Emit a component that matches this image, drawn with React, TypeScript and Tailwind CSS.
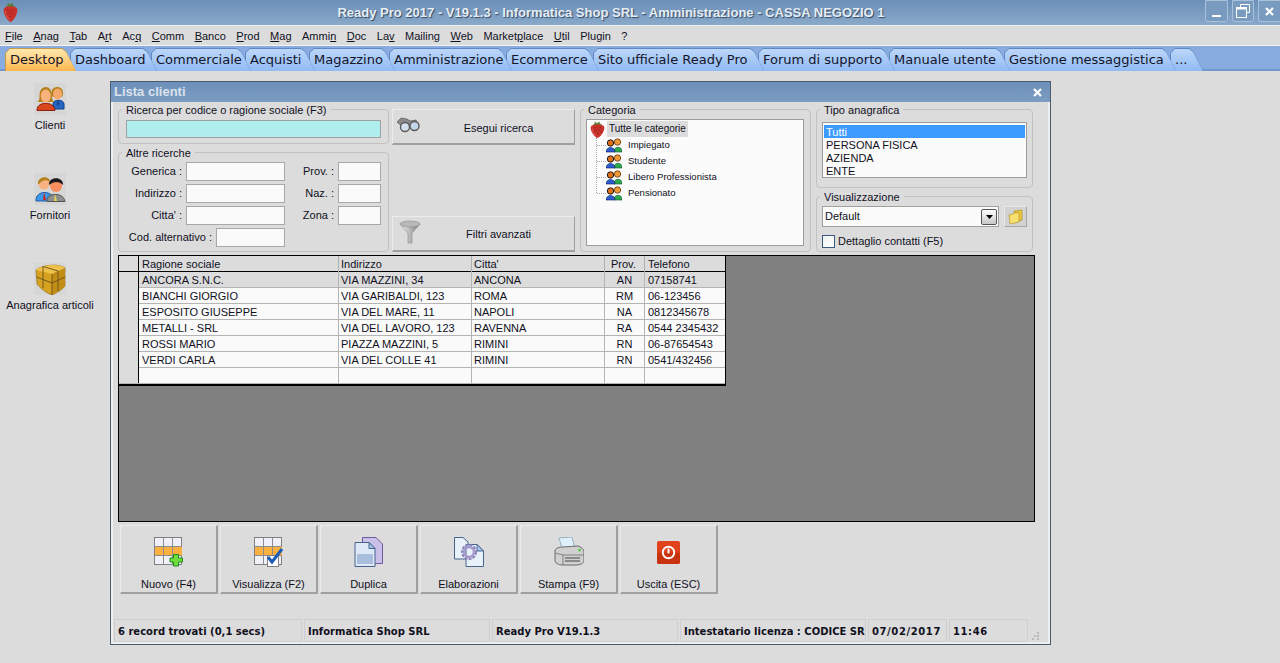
import React from 'react';

const menus: [string, number][] = [
  ['File', 0], ['Anag', 0], ['Tab', 0], ['Art', 1], ['Acq', 2], ['Comm', 0], ['Banco', 0], ['Prod', 0], ['Mag', 0],
  ['Ammin', 4], ['Doc', 0], ['Lav', 2], ['Mailing', 6], ['Web', 0], ['Marketplace', 6], ['Util', 0], ['Plugin', -1], ['?', -1],
];

const tabs: [string, string][] = [
  ['Desktop', 'w-[71px]'], ['Dashboard', 'w-[87px]'], ['Commerciale', 'w-[100px]'], ['Acquisti', 'w-[70px]'],
  ['Magazzino', 'w-[86px]'], ['Amministrazione', 'w-[123px]'], ['Ecommerce', 'w-[93px]'], ['Sito ufficiale Ready Pro', 'w-[171px]'],
  ['Forum di supporto', 'w-[137px]'], ['Manuale utente', 'w-[121px]'], ['Gestione messaggistica', 'w-[172px]'], ['...', 'w-[33px]'],
];

const rows = [
  ['ANCORA S.N.C.', 'VIA MAZZINI, 34', 'ANCONA', 'AN', '07158741'],
  ['BIANCHI GIORGIO', 'VIA GARIBALDI, 123', 'ROMA', 'RM', '06-123456'],
  ['ESPOSITO GIUSEPPE', 'VIA DEL MARE, 11', 'NAPOLI', 'NA', '0812345678'],
  ['METALLI - SRL', 'VIA DEL LAVORO, 123', 'RAVENNA', 'RA', '0544 2345432'],
  ['ROSSI MARIO', 'PIAZZA MAZZINI, 5', 'RIMINI', 'RN', '06-87654543'],
  ['VERDI CARLA', 'VIA DEL COLLE 41', 'RIMINI', 'RN', '0541/432456'],
  ['', '', '', '', ''],
];

const Strawberry = ({ w = 15, h = 17 }: { w?: number; h?: number }) => (
  <svg width={w} height={h} viewBox="0 0 16 20" preserveAspectRatio="none">
    <path d="M3 4 L5 3 L5 0.500 L7.500 2.500 L10 0.500 L10.500 3 L13 4 L8 6 Z" fill="#5b7f3a" />
    <path d="M1 6.500 C3 3.500 13 3.500 15 6.500 C16.500 11 11 19.500 8 19.800 C5 19.500 -0.500 11 1 6.500 Z" fill="#c9302a" />
    <path d="M2.500 7 C2.500 11 5.500 16 8 18 C4.500 17 1 11 2.500 7 Z" fill="#dd5a50" />
    <g fill="#7e1c18">
      <circle cx="5" cy="8" r=".6" /><circle cx="8" cy="8" r=".6" /><circle cx="11" cy="8" r=".6" />
      <circle cx="6.500" cy="11" r=".6" /><circle cx="9.500" cy="11" r=".6" /><circle cx="4.500" cy="12" r=".5" /><circle cx="11.500" cy="12" r=".5" />
      <circle cx="8" cy="14.500" r=".6" />
    </g>
  </svg>
);

const ClientiIcon = () => (
  <svg width="32" height="32" viewBox="0 0 32 32">
    <path d="M19 21 C19 16 30 16 30 21 V26 H19 Z" fill="#2566c4" stroke="#123c80" />
    <path d="M24 17 L26 21 L24 23 L22 21 Z" fill="#1c4a96" />
    <path d="M17.500 10 C17 2 29.500 2 29 10 C29 12 28.500 13 28 14 H19 C18 13 17.500 12 17.500 10 Z" fill="#b5821f" />
    <ellipse cx="23.500" cy="11" rx="4.500" ry="5.500" fill="#f4a86c" />
    <path d="M3 27 C3 18 20 18 21 27 V27.500 H3 Z" fill="#d8481c" stroke="#8a1c0c" />
    <path d="M5.500 13 C5 1 18.500 1 18 13 C18 16 19 18 20 19 H3.500 C5 18 5.500 16 5.500 13 Z" fill="#b5821f" />
    <ellipse cx="11.800" cy="13" rx="5" ry="6.500" fill="#fab27c" />
  </svg>
);

const FornitoriIcon = () => (
  <svg width="32" height="32" viewBox="0 0 32 32">
    <path d="M2 27 C2 17 19 17 20 27 V28 H2 Z" fill="#3d97e8" stroke="#1c5aa8" />
    <path d="M10 19 L12 27 L9 27 Z" fill="#c8281c" />
    <circle cx="10" cy="11" r="5.500" fill="#f7b27f" />
    <path d="M4 11 C3 3 16 2 16 9 C12 6 8 7 5 11 Z" fill="#b5821f" />
    <path d="M13 28.500 C12 19 30 19 31 28.500 Z" fill="#8e8e8e" stroke="#555" />
    <path d="M21 21 L23 28 L20 28 Z" fill="#e8d050" />
    <circle cx="22" cy="13" r="6" fill="#fa8e5e" />
    <path d="M15 12 C14 3 30 3 29 12 C25 8 20 8 15 12 Z" fill="#1a1a1a" />
  </svg>
);

const BoxIcon = () => (
  <svg width="32" height="32" viewBox="0 0 32 32">
    <path d="M2 7 C8 2 24 0 31 5 L31 23 C28 27 22 30 18 32 C12 30 6 25 3 21 Z" fill="#d6a11e" stroke="#8a6410" strokeWidth=".6" />
    <path d="M2 7 C8 2 24 0 31 5 L18 11 Z" fill="#eec24a" />
    <path d="M18 11 L31 5 L31 23 C28 27 22 30 18 32 Z" fill="#c28d14" />
    <path d="M9 3.500 L24 8 M9 3.500 V25 M24 8 V28 M2.500 14 L18 20 L31 14 M18 11 V32" fill="none" stroke="#6a5020" strokeWidth=".9" />
  </svg>
);

const SmallPeople = () => (
  <svg width="16" height="16" viewBox="0 0 16 16">
    <path d="M8 14 C8 9 16 9 16 14 V15 H8 Z" fill="#2aa84a" stroke="#14502a" strokeWidth=".6" />
    <circle cx="11.500" cy="5" r="3.200" fill="#f09a3a" stroke="#5a3410" strokeWidth=".8" />
    <path d="M0 15 C0 9 9 9 9 15 Z" fill="#2a5ad0" stroke="#10245a" strokeWidth=".6" />
    <circle cx="4.500" cy="6" r="3.200" fill="#e0701c" stroke="#1a1a1a" strokeWidth="1" />
  </svg>
);

const Binoculars = () => (
  <svg width="24" height="16" viewBox="0 0 24 16">
    <path d="M1 5 L5 1 L11 2 L14 4 L20 3 L23 8 L14 9 L8 11 Z" fill="#8a8a8a" stroke="#4a4a4a" strokeWidth=".6" />
    <circle cx="9" cy="10" r="4.500" fill="#d4e2f0" stroke="#5a5a5a" strokeWidth="1.400" />
    <circle cx="18.500" cy="9" r="4.500" fill="#c4d6e8" stroke="#5a5a5a" strokeWidth="1.400" />
  </svg>
);

const Funnel = () => (
  <svg width="22" height="24" viewBox="0 0 22 24">
    <defs>
      <linearGradient id="fun" x1="0" x2="1">
        <stop offset="0" stopColor="#f4f4f4" /><stop offset="1" stopColor="#7a7a7a" />
      </linearGradient>
    </defs>
    <path d="M1 4 L21 4 L13 13 L13 23 L9 23 L9 13 Z" fill="url(#fun)" stroke="#8a8a8a" strokeWidth=".6" />
    <ellipse cx="11" cy="4" rx="10" ry="3" fill="#b8b8b8" stroke="#8a8a8a" strokeWidth=".6" />
  </svg>
);

const GridBase = () => (
  <>
    <rect x=".5" y=".5" width="27" height="27" fill="#f0f0fa" stroke="#808080" />
    <rect x="1" y="9.500" width="27" height="9" fill="#fbb040" />
    <path d="M9.500 1 V27 M18.500 1 V27 M1 9.500 H27 M1 18.500 H27" stroke="#8c8c8c" fill="none" />
  </>
);

const NuovoIcon = () => (
  <svg width="30" height="30" viewBox="0 0 30 30">
    <GridBase />
    <path d="M19.500 17.500 H24.500 V21 H28.500 V25 H24.500 V29 H19.500 V25 H16 V21 H19.500 Z" fill="#6fdc3c" stroke="#1f8a1c" />
  </svg>
);

const VisualizzaIcon = () => (
  <svg width="30" height="30" viewBox="0 0 30 30">
    <GridBase />
    <rect x="13.500" y="18.500" width="11" height="11" fill="#fff" stroke="#808080" />
    <path d="M14 20 L18 25 L28 12" fill="none" stroke="#1c5cb8" strokeWidth="3" />
  </svg>
);

const DuplicaIcon = () => (
  <svg width="30" height="30" viewBox="0 0 30 30">
    <path d="M8.500 .5 H22 L28.500 7 V26.500 H8.500 Z" fill="#cabfe6" stroke="#6a5aa0" />
    <path d="M1 5.500 H15 L21 11.500 V29.500 H1 Z" fill="#dfe8f6" stroke="#46648c" />
    <path d="M15 5.500 V11.500 H21 Z" fill="#a8c8e8" stroke="#46648c" />
    <rect x="3" y="17" width="16" height="10" fill="#a9bedd" />
  </svg>
);

const ElaborazioniIcon = () => (
  <svg width="30" height="30" viewBox="0 0 30 30">
    <path d="M.5 .5 H9 L14 5 V22 H.5 Z" fill="#e8f0fa" stroke="#46648c" />
    <path d="M12 7.500 H23 L29.500 14 V29.500 H12 Z" fill="#e8f0fa" stroke="#46648c" />
    <path d="M23 7.500 V14 H29.500 Z" fill="#a8c8e8" stroke="#46648c" />
    <circle cx="15" cy="15" r="6" fill="none" stroke="#8f84bc" strokeWidth="4" strokeDasharray="2.500 1" />
    <circle cx="15" cy="15" r="5" fill="none" stroke="#a79ccc" strokeWidth="2.500" />
  </svg>
);

const PrinterIcon = () => (
  <svg width="30" height="30" viewBox="0 0 30 30">
    <path d="M5 1 L18 0 L21 12 L9 14 Z" fill="#dff0fa" stroke="#98b0c0" />
    <path d="M1 14 C1 11 6 10 9 10 L24 9 C27 10 30 12 30 15 V24 C30 26 26 28 22 28 H9 C4 28 1 26 1 23 Z" fill="#d0d0d0" stroke="#6a6a6a" />
    <path d="M1 16 L9 18 H30 M9 18 V28" fill="none" stroke="#808080" />
    <path d="M11 21 H26 M11 24 H26" stroke="#444" />
    <circle cx="25.500" cy="13" r="1.500" fill="#5ecb4a" />
  </svg>
);

const PowerIcon = () => (
  <svg width="23" height="23" viewBox="0 0 24 24">
    <rect width="24" height="24" rx="2" fill="#e0421c" />
    <rect y="12" width="24" height="12" rx="2" fill="#c8320f" />
    <circle cx="12" cy="12" r="6" fill="none" stroke="#fff" strokeWidth="2" />
    <path d="M12 8 V13" stroke="#fff" strokeWidth="2" />
  </svg>
);

const FolderIcon = () => (
  <svg width="16" height="16" viewBox="0 0 16 16">
    <path d="M6 2 L14 1 V11 L6 14 Z" fill="#e8c840" stroke="#a88a20" strokeWidth=".6" />
    <path d="M1 6 L5 5 L6 4 L11 3.500 V13 L2 15 Z" fill="#f8e070" stroke="#a88a20" strokeWidth=".6" />
  </svg>
);

const Group = ({ title, className, children }: { title: string; className: string; children: React.ReactNode }) => (
  <fieldset className={`border border-[#c2c2c2] rounded-[4px] px-[5px] ${className}`}>
    <legend className="-ml-[2px] px-[4px] h-[14px] leading-[16px] -mb-px">{title}</legend>
    {children}
  </fieldset>
);

const Field = ({ label, w, boxW }: { label: string; w: string; boxW: string }) => (
  <div className="flex items-center">
    <span className={`${w} text-right pr-[4px]`}>{label}</span>
    <span className={`${boxW} h-[19px] bg-[#fafafa] border border-[#a8a8a8]`} />
  </div>
);

const ActionButton = ({ label, icon }: { label: string; icon: React.ReactNode }) => (
  <button className="w-[98px] h-[69px] flex flex-col items-center border border-t-[#ececec] border-l-[#ececec] border-r-2 border-b-2 border-r-[#a0a0a0] border-b-[#a0a0a0] bg-[#dcdcdc]">
    <span className="h-[30px] mt-[11px] flex items-center justify-center">{icon}</span>
    <span className="mt-[10px] leading-[14px]">{label}</span>
  </button>
);

const StatusCell = ({ text, w, className = '' }: { text: string; w: string; className?: string }) => (
  <div className={`${w} ${className} h-[23px] border border-[#cfcfcf] pl-[3px] pt-[1px] flex items-center overflow-hidden whitespace-nowrap font-bold text-[10px] font-['DejaVu_Sans',sans-serif]`}>
    {text}
  </div>
);

const cols = 'grid grid-cols-[20px_200px_133px_133px_40px_81px]';

export default function App() {
  return (
    <div className="w-[1280px] h-[663px] overflow-hidden bg-[#dcdcdc] text-[#10101c] text-[11px] font-['Liberation_Sans',sans-serif]">
      {/* Title bar */}
      <div className="relative h-[26px] bg-gradient-to-b from-[#6b8fb8] to-[#8aa9c9] border-b border-[#f0f0f0] flex items-center justify-center">
        <span className="absolute left-[3px] top-[2px]"><Strawberry w={15} h={20} /></span>
        <span className="ml-[-58px] text-[13px] font-bold text-[#e6edf4] [text-shadow:1px_1px_1px_#2f4a68]">
          Ready Pro 2017 - V19.1.3 - Informatica Shop SRL - Amministrazione - CASSA NEGOZIO 1
        </span>
        <div className="absolute right-0 top-0 flex gap-[4px]">
          <div className="w-[23px] h-[22px] rounded-b-[3px] border border-[#a9c1da] bg-[#7a9bc0] flex items-end justify-center pb-[4px]">
            <span className="w-[9px] h-[2px] bg-white" />
          </div>
          <div className="w-[22px] h-[22px] rounded-b-[3px] border border-[#a9c1da] bg-[#7a9bc0] flex items-center justify-center">
            <svg width="14" height="14" viewBox="0 0 14 14" fill="none" stroke="#fff">
              <path d="M4.500 3.500 V.5 H13.500 V8.500 H10.500" />
              <rect x=".5" y="3.500" width="10" height="10" />
              <path d="M1 4.500 H10" strokeWidth="2" />
            </svg>
          </div>
          <div className="w-[22px] h-[22px] rounded-bl-[3px] border border-r-0 border-[#a9c1da] bg-[#7a9bc0] flex items-center justify-center">
            <svg width="9" height="9" viewBox="0 0 9 9" stroke="#fff" strokeWidth="2.200"><path d="M1 1 L8 8 M8 1 L1 8" /></svg>
          </div>
        </div>
      </div>

      {/* Menu */}
      <div className="h-[19px] flex items-center pl-[5px] gap-[10.5px] pt-[1px]">
        {menus.map(([m, u]) => (
          <span key={m}>
            {u < 0 ? m : <>{m.slice(0, u)}<span className="underline">{m[u]}</span>{m.slice(u + 1)}</>}
          </span>
        ))}
      </div>

      {/* Tabs */}
      <div className="h-[26px] border-t border-[#f4f4f4] bg-[#88ace0] border-b-2 border-b-[#6f97cf] flex pl-[5px] pt-[2px]">
        {tabs.map(([t, w], i) => (
          <div
            key={t}
            style={{ zIndex: 20 - i }}
            className={`relative -mr-[6px] h-[23px] ${w} ${i === 0 ? 'bg-[#c59a4a]' : 'bg-[#5f89c4]'} [clip-path:polygon(0_5px,5px_0,calc(100%-14px)_0,calc(100%-10px)_3px,100%_100%,0_100%)]`}
          >
            <div className={`mt-[1px] ml-[1px] h-[22px] pl-[4px] text-[13px] leading-[22px] whitespace-nowrap text-[#14142a] font-['DejaVu_Sans',sans-serif] [clip-path:polygon(0_4px,4px_0,calc(100%-14px)_0,calc(100%-10px)_3px,100%_100%,0_100%)] bg-gradient-to-b ${i === 0 ? 'from-[#ffe9ad] to-[#ffb64a]' : 'from-[#bcd6f8] to-[#90bbf5]'}`}>
              {t}
            </div>
          </div>
        ))}
      </div>

      <div className="flex">
        {/* Desktop icons */}
        <div className="w-[110px] pt-[12px] flex flex-col">
          {[
            ['Clienti', <ClientiIcon key="c" />],
            ['Fornitori', <FornitoriIcon key="f" />],
            ['Anagrafica articoli', <BoxIcon key="b" />],
          ].map(([label, icon]) => (
            <div key={label as string} className="h-[90px] flex flex-col items-center pr-[10px]">
              <span className="w-[32px] h-[32px] bg-[#d6d6d6]">{icon}</span>
              <span className="mt-[3px] leading-[14px] whitespace-nowrap">{label}</span>
            </div>
          ))}
        </div>

        {/* Lista clienti window */}
        <div className="mt-[10px] w-[941px] h-[564px] border border-[#4c5c6c] flex flex-col">
          <div className="h-[20px] shrink-0 bg-gradient-to-b from-[#6c90b9] to-[#7c9cc1] flex items-center justify-between pl-[3px] pr-[8px]">
            <span className="text-[13px] font-bold text-[#d9e2ec]">Lista clienti</span>
            <svg width="9" height="9" viewBox="0 0 9 9" stroke="#fff" strokeWidth="2.200"><path d="M1 1 L8 8 M8 1 L1 8" /></svg>
          </div>
          <div className="flex-1 border-x-2 border-b-2 border-[#efefef] flex flex-col">
            <div className="px-[5px]">
              <div className="flex h-[150px]">
                {/* Search groups */}
                <div className="w-[271px] flex flex-col gap-px">
                  <Group title="Ricerca per codice o ragione sociale (F3)" className="h-[42px]">
                    <div className="mx-[2px] mt-[5px] h-[18px] bg-[#aeeeee] border border-[#a0a0a0]" />
                  </Group>
                  <Group title="Altre ricerche" className="h-[107px]">
                    <div className="mx-[2px] mt-[4px] flex flex-col gap-[3px]">
                      <div className="flex justify-between"><Field label="Generica :" w="w-[60px]" boxW="w-[99px]" /><Field label="Prov. :" w="w-[50px]" boxW="w-[43px]" /></div>
                      <div className="flex justify-between"><Field label="Indirizzo :" w="w-[60px]" boxW="w-[99px]" /><Field label="Naz. :" w="w-[50px]" boxW="w-[43px]" /></div>
                      <div className="flex justify-between"><Field label="Citta' :" w="w-[60px]" boxW="w-[99px]" /><Field label="Zona :" w="w-[50px]" boxW="w-[43px]" /></div>
                      <div className="flex"><Field label="Cod. alternativo :" w="w-[90px]" boxW="w-[69px]" /></div>
                    </div>
                  </Group>
                </div>

                {/* Search buttons */}
                <div className="w-[183px] ml-[3px] pt-[7px] flex flex-col justify-between">
                  <button className="relative h-[36px] border border-t-[#ececec] border-l-[#ececec] border-r-[#a0a0a0] border-b-2 border-b-[#a0a0a0] flex items-center justify-center pl-[30px] pt-[3px] text-[11px]">
                    <span className="absolute left-[3px] top-[7px]"><Binoculars /></span>
                    Esegui ricerca
                  </button>
                  <button className="relative h-[36px] border border-t-[#ececec] border-l-[#ececec] border-r-[#a0a0a0] border-b-2 border-b-[#a0a0a0] flex items-center justify-center pl-[30px] pt-[2px] text-[11px]">
                    <span className="absolute left-[6px] top-[3px]"><Funnel /></span>
                    Filtri avanzati
                  </button>
                </div>

                {/* Categoria */}
                <Group title="Categoria" className="w-[231px] ml-[5px] h-[150px]">
                  <div className="mt-[4px] w-[218px] h-[127px] bg-[#fbfbfb] border border-[#9c9c9c] pl-[3px] pt-[1px] text-[9.5px]">
                    <div className="flex items-center h-[16px]">
                      <Strawberry />
                      <span className="ml-[2px] h-[16px] px-[2px] bg-[#dcdcdc] leading-[16px] text-[10px]">Tutte le categorie</span>
                    </div>
                    <div className="ml-[6px] border-l border-dotted border-[#a8a8a8] h-[56px]">
                      {['Impiegato', 'Studente', 'Libero Professionista', 'Pensionato'].map((c) => (
                        <div key={c} className="h-[16px] flex items-center">
                          <span className="w-[9px] border-t border-dotted border-[#a8a8a8]" />
                          <SmallPeople />
                          <span className="ml-[6px] whitespace-nowrap">{c}</span>
                        </div>
                      ))}
                    </div>
                  </div>
                </Group>

                {/* Tipo anagrafica + Visualizzazione */}
                <div className="w-[217px] ml-[5px] flex flex-col gap-px">
                  <Group title="Tipo anagrafica" className="h-[86px]">
                    <div className="mt-[7px] pt-[2px] h-[56px] bg-[#fbfbfb] border border-[#9c9c9c] px-px">
                      {['Tutti', 'PERSONA FISICA', 'AZIENDA', 'ENTE'].map((c, i) => (
                        <div key={c} className={`h-[13px] leading-[14px] pl-[2px] ${i === 0 ? 'bg-[#3d9bff] text-white' : ''}`}>{c}</div>
                      ))}
                    </div>
                  </Group>
                  <Group title="Visualizzazione" className="h-[63px]">
                    <div className="mt-[4px] flex">
                      <div className="w-[177px] h-[21px] bg-[#fbfbfb] border border-[#a0a0a0] flex items-center justify-between pl-[2px] pr-px">
                        Default
                        <span className="w-[16px] h-[16px] rounded-[2px] border border-[#555] bg-gradient-to-b from-white to-[#c8c8c8] flex items-center justify-center">
                          <svg width="7" height="4" viewBox="0 0 7 4"><path d="M0 0 H7 L3.500 4 Z" fill="#000" /></svg>
                        </span>
                      </div>
                      <div className="ml-[5px] w-[23px] h-[21px] bg-[#d2d2d2] border border-[#e8e8e8] border-b-[#a8a8a8] border-r-[#a8a8a8] flex items-center justify-center">
                        <FolderIcon />
                      </div>
                    </div>
                    <label className="mt-[6px] flex items-center">
                      <span className="w-[13px] h-[13px] bg-gradient-to-br from-[#f0f0f0] to-white border border-[#3c5a80]" />
                      <span className="ml-[3px]">Dettaglio contatti (F5)</span>
                    </label>
                  </Group>
                </div>
              </div>

              {/* Results grid */}
              <div className="mt-[3px] w-[917px] h-[267px] bg-[#808080] border border-black">
                <div className="w-[607px] border-r border-b-2 border-black bg-[#fafafa]">
                  <div className={`${cols} h-[16px] bg-[#dcdcdc] border-b border-black leading-[17px]`}>
                    <div className="border-r border-black" />
                    <div className="pl-[3px] border-r border-[#b0b0b0]">Ragione sociale</div>
                    <div className="pl-[2px] border-r border-[#b0b0b0]">Indirizzo</div>
                    <div className="pl-[2px] border-r border-[#b0b0b0]">Citta'</div>
                    <div className="pl-[6px] border-r border-[#b0b0b0]">Prov.</div>
                    <div className="pl-[3px]">Telefono</div>
                  </div>
                  {rows.map((r, i) => (
                    <div key={i} className={`${cols} h-[16px] border-b border-[#b4b4b4] leading-[17px] ${i === 0 ? 'bg-[#dcdcdc]' : ''}`}>
                      <div className="bg-[#dcdcdc] border-r border-black" />
                      <div className="pl-[3px] border-r border-[#b4b4b4]">{r[0]}</div>
                      <div className="pl-[2px] border-r border-[#b4b4b4]">{r[1]}</div>
                      <div className="pl-[2px] border-r border-[#b4b4b4]">{r[2]}</div>
                      <div className="text-center border-r border-[#b4b4b4]">{r[3]}</div>
                      <div className="pl-[3px]">{r[4]}</div>
                    </div>
                  ))}
                </div>
              </div>

              {/* Actions */}
              <div className="mt-[3px] ml-[2px] flex gap-[2px]">
                <ActionButton label="Nuovo (F4)" icon={<NuovoIcon />} />
                <ActionButton label="Visualizza (F2)" icon={<VisualizzaIcon />} />
                <ActionButton label="Duplica" icon={<DuplicaIcon />} />
                <ActionButton label="Elaborazioni" icon={<ElaborazioniIcon />} />
                <ActionButton label="Stampa (F9)" icon={<PrinterIcon />} />
                <ActionButton label="Uscita (ESC)" icon={<PowerIcon />} />
              </div>
            </div>

            {/* Status bar */}
            <div className="mt-[25px] pl-px flex items-center gap-[2px]">
              <StatusCell text="6 record trovati (0,1 secs)" w="w-[188px]" />
              <StatusCell text="Informatica Shop SRL" w="w-[186px]" />
              <StatusCell text="Ready Pro V19.1.3" w="w-[186px]" />
              <StatusCell text="Intestatario licenza : CODICE SRL" w="w-[186px]" />
              <StatusCell text="07/02/2017" w="w-[79px]" className="tracking-[0.6px]" />
              <StatusCell text="11:46" w="w-[79px]" className="tracking-[0.6px]" />
              <svg className="ml-[2px] mt-[10px]" width="8" height="8" viewBox="0 0 8 8" fill="#b8b8b8">
                <rect x="5" y="0" width="2" height="2" /><rect x="2" y="3" width="2" height="2" /><rect x="5" y="3" width="2" height="2" /><rect x="0" y="6" width="2" height="2" /><rect x="5" y="6" width="2" height="2" />
              </svg>
            </div>
          </div>
        </div>
      </div>
    </div>
  );
}
